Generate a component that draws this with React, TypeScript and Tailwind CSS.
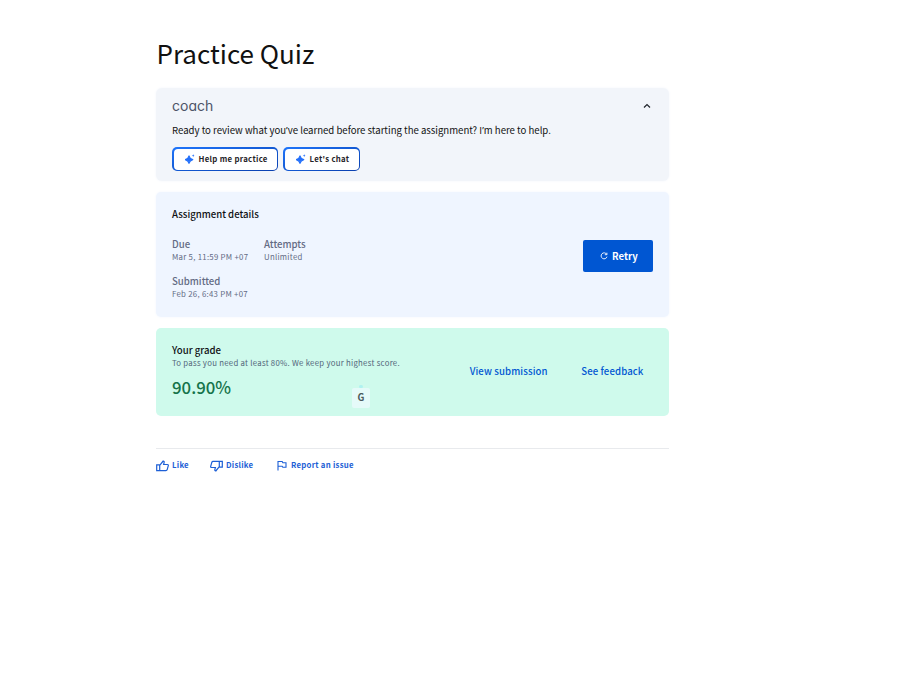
import type { ReactNode } from "react";

function Sparkle() {
  return (
    <svg width="10" height="10" viewBox="0 0 10 10" fill="#2470fa" className="shrink-0">
      <path d="M4 1.8C4.6 4.2 5.4 5 7.8 5.6 5.4 6.2 4.6 7 4 9.4 3.4 7 2.6 6.2 .2 5.6 2.6 5 3.4 4.2 4 1.8Z" stroke="#2470fa" strokeWidth="1.1" strokeLinejoin="round" />
      <path d="M8.2 0C8.4 1.1 8.7 1.4 9.8 1.6 8.7 1.8 8.4 2.1 8.2 3.2 8 2.1 7.7 1.8 6.6 1.6 7.7 1.4 8 1.1 8.2 0Z" />
    </svg>
  );
}

function CoachButton({ children, className }: { children: ReactNode; className: string }) {
  return (
    <button className={`h-6 rounded-[5px] bg-linear-to-br from-[#1f75fb] to-[#0a3fae] p-[1.5px] ${className}`}>
      <span className="flex h-full items-center gap-1 rounded-[4px] bg-white pl-[11px] text-[7.8px] font-bold leading-[14px] tracking-[0.3px] text-[#1f2328]">
        <Sparkle />
        <span className="-mt-px whitespace-nowrap">{children}</span>
      </span>
    </button>
  );
}

function Detail({ label, value, className }: { label: string; value: string; className: string }) {
  return (
    <div className={`whitespace-nowrap text-[#636b84] ${className}`}>
      <div className="text-[9.6px] font-medium leading-[14px]">{label}</div>
      <div className="text-[7.8px] leading-[12px] tracking-[0.28px]">{value}</div>
    </div>
  );
}

function Apostrophe() {
  return <span className="font-['Noto_Sans']">’</span>;
}

function Thumb({ down = false }: { down?: boolean }) {
  return (
    <svg width="13" height="12" viewBox="0 0 13 12" fill="none" stroke="#1d5fd6" strokeWidth="1.2" className={down ? "mt-[2px] rotate-180" : "mt-px"}>
      <path d="M.7 4.9H3.7V10.6H.7Z M3.7 5.3 7.2 1C8.1 1.2 8.3 1.8 8.1 2.6L7.6 4.5H11.4C12.2 4.5 12.5 5 12.3 5.7L11.2 9.7C11 10.4 10.6 10.6 9.9 10.6H3.7" />
    </svg>
  );
}

export default function App() {
  return (
    <div className="min-h-[700px] bg-white pl-[156px] pt-[35px] font-['Noto_Sans_CJK_SC',sans-serif]">
      <main className="w-[513px]">
        <h1 className="h-[53px] whitespace-nowrap pl-[0.5px] text-[26px] leading-9 text-[#111]">Practice Quiz</h1>

        <section className="h-[93px] rounded-md bg-[#f2f5fa] px-4 pt-[10px] shadow-[0_0_3px_#f2f5fc]">
          <div className="flex h-4 items-center justify-between">
            <span className="font-[Inter] text-[14px] leading-4 text-[#4d5468] [font-feature-settings:'cv11']">coach</span>
            <svg width="8" height="6" viewBox="0 0 8 6" fill="none" stroke="#20242b" strokeWidth="1.2" className="mr-[2px]">
              <path d="M1 4.5 4 1.5 7 4.5" />
            </svg>
          </div>
          <p className="mt-2 h-4 whitespace-nowrap text-[9.6px] leading-4 text-[#111]">
            Ready to review what you<Apostrophe />ve learned before starting the assignment? I<Apostrophe />m here to help.
          </p>
          <div className="mt-[9px] flex gap-[5px]">
            <CoachButton className="w-[106px]">Help me practice</CoachButton>
            <CoachButton className="w-[77px]">Let's chat</CoachButton>
          </div>
        </section>

        <section className="mt-[11px] flex h-[125px] justify-between rounded-[5px] bg-[#eff5ff] px-4 shadow-[0_0_3px_#f2f6ff]">
          <div className="pt-[14px]">
            <h2 className="text-[9.6px] font-medium leading-4 text-[#0f1114]">Assignment details</h2>
            <div className="mt-[14.5px] flex">
              <Detail label="Due" value="Mar 5, 11:59 PM +07" className="w-[92px]" />
              <Detail label="Attempts" value="Unlimited" className="w-[60px]" />
            </div>
            <Detail label="Submitted" value="Feb 26, 6:43 PM +07" className="mt-[11.5px]" />
          </div>
          <button className="mt-12 flex h-8 w-[70px] items-center gap-1 rounded-[2px] bg-[#0056d2] pl-[17px] text-[9.6px] font-bold text-white">
            <svg width="8" height="8" viewBox="0 0 8 8" fill="none" stroke="white" strokeWidth=".9">
              <path d="M6.7 2.3A3 3 0 1 0 7 4.7M6.9 .7V2.7H4.8" />
            </svg>
            Retry
          </button>
        </section>

        <section className="relative mt-[11px] flex h-[88px] justify-between rounded-[5px] bg-[#cffaec] px-4 pt-[14px]">
          <div className="whitespace-nowrap">
            <h2 className="text-[9.6px] font-medium leading-4 text-[#0f1114]">Your grade</h2>
            <p className="text-[7.8px] leading-[10px] tracking-[0.27px] text-[#52657a]">To pass you need at least 80%. We keep your highest score.</p>
            <div className="mt-[7px] text-[16.8px] font-medium leading-6 text-[#15734a]">90.90%</div>
          </div>
          <div className="mt-px flex h-14 items-center gap-[33.5px] pr-[9.5px] text-[9.6px] font-medium tracking-[0.12px] text-[#0056d2]">
            <a className="whitespace-nowrap">View submission</a>
            <a className="whitespace-nowrap">See feedback</a>
          </div>
          <span className="absolute left-[196px] top-[60px] flex h-5 w-[18px] items-center justify-center rounded-[2px] bg-[#e5faf9] pb-[2px] text-[9.6px] font-bold text-[#4a585c]">G</span>
          <span className="absolute left-[203px] top-[57px] h-[3px] w-1 rounded-full bg-[#b0f2f0]" />
        </section>

        <footer className="mt-8 flex h-[33px] items-center border-t border-[#e8eaed] text-[7.8px] font-bold tracking-[0.25px] text-[#1d5fd6]">
          <a className="flex w-[54px] items-center gap-[3px]"><Thumb />Like</a>
          <a className="flex w-[67px] items-center gap-[3px]"><Thumb down />Dislike</a>
          <a className="flex items-center gap-1 whitespace-nowrap">
            <svg width="10" height="11" viewBox="0 0 10 11" fill="none" stroke="#1d5fd6" strokeWidth="1.1">
              <path d="M1 10.5V1.5H5.2L5.8 2.7H9V7.2H5.8L5.2 6.2H1" />
            </svg>
            Report an issue
          </a>
        </footer>
      </main>
    </div>
  );
}
